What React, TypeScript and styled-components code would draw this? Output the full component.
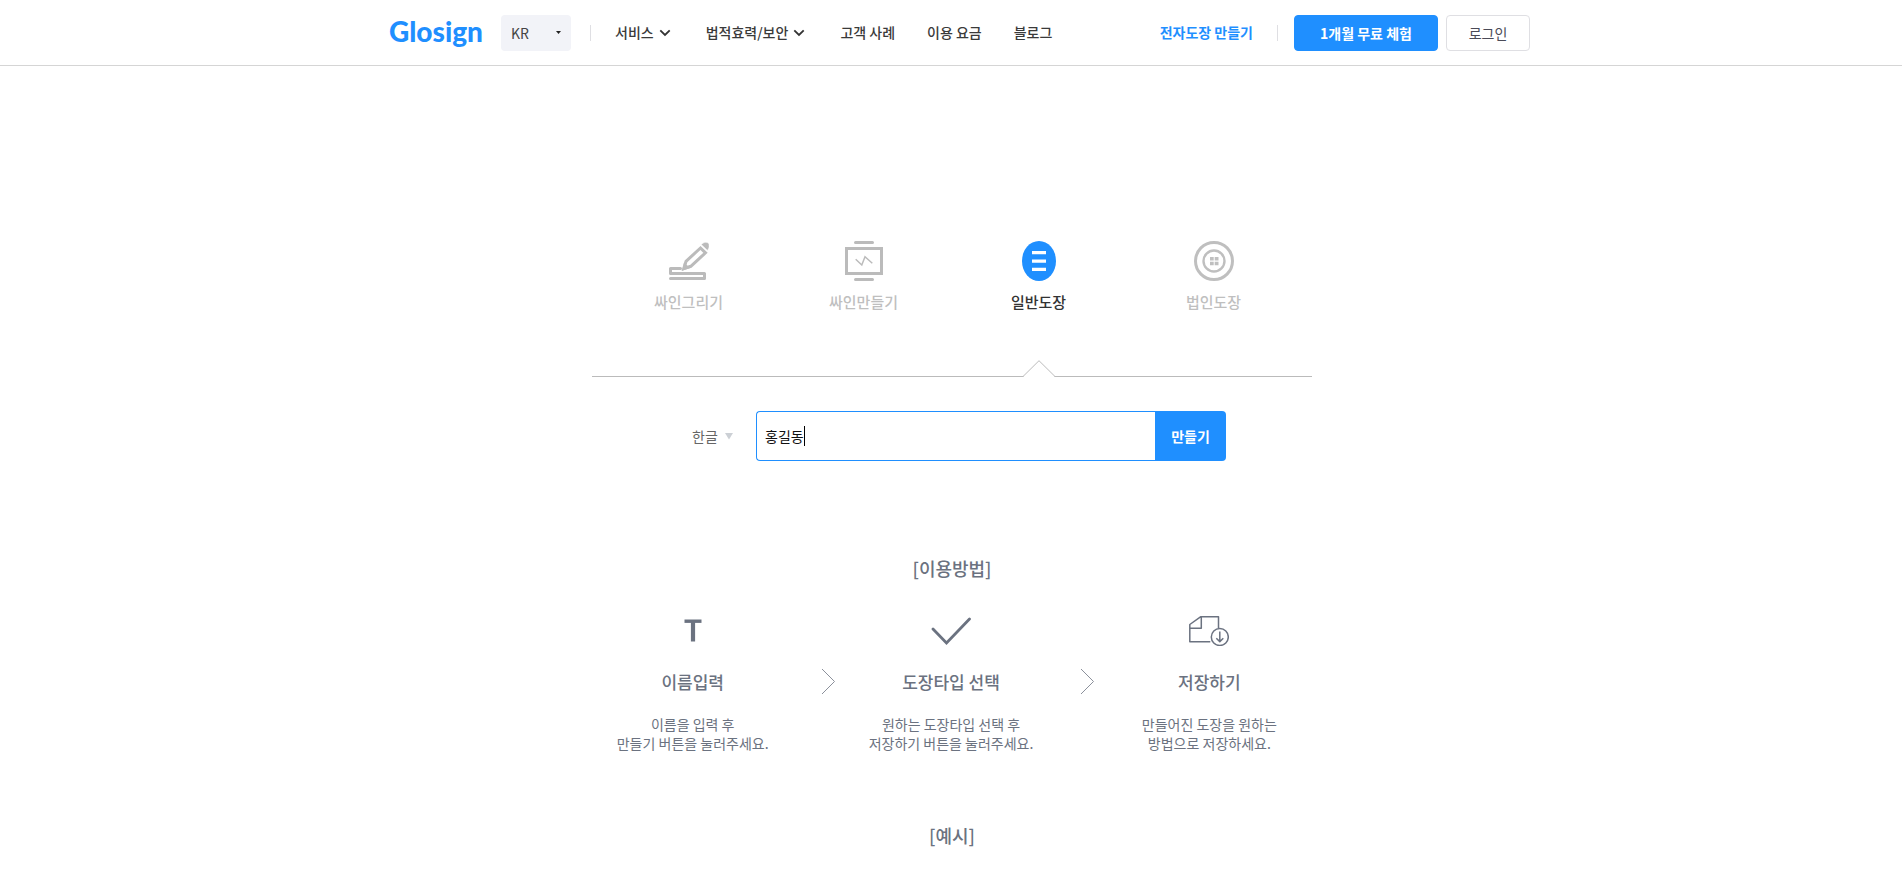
import React from 'react';
import styled, { createGlobalStyle } from 'styled-components';

const GlobalStyle = createGlobalStyle`
  *, *::before, *::after { box-sizing: border-box; }
  body {
    margin: 0;
    background: #fff;
    color: #333;
    font-family: "Noto Sans CJK KR", "Noto Sans", sans-serif;
    font-size: 14px;
    line-height: 20px;
  }
  button, input, select { font: inherit; }
  h2, h3, p { margin: 0; font-weight: 400; }
`;

const Header = styled.header`
  display: flex;
  justify-content: center;
  height: 66px;
  padding: 0 16px;
  border-bottom: 1px solid #d5d5d5;
`;

const HeaderInner = styled.div`
  display: flex;
  align-items: center;
  width: 100%;
  max-width: 1158px;
  padding-left: 17px;
`;

const Logo = styled.a`
  width: 96px;
  padding-bottom: 4px;
  color: #1f8fff;
  font-family: Lato, sans-serif;
  font-size: 28px;
  font-weight: 900;
  line-height: 32px;
  text-decoration: none;
`;

const SelectBox = styled.div`
  display: flex;
  align-items: center;
  position: relative;

  svg {
    position: absolute;
    right: 10px;
    pointer-events: none;
  }
`;

const LocaleSelect = styled.select`
  appearance: none;
  width: 70px;
  height: 36px;
  margin-left: 16px;
  padding: 0 10px;
  border: 0;
  border-radius: 4px;
  background: #f2f3f8;
  color: #444;
`;

const Divider = styled.span<{ $left: number; $right: number }>`
  flex: none;
  width: 1px;
  height: 16px;
  margin: 0 ${(p) => p.$right}px 0 ${(p) => p.$left}px;
  background: #dfdfe3;
`;

const Nav = styled.nav`
  display: flex;
  flex: 1;
  gap: 32px;
`;

const NavLink = styled.a`
  display: flex;
  align-items: center;
  gap: 4px;
  padding-bottom: 2px;
  color: #3a3a3a;
  font-weight: 500;
  white-space: nowrap;
  text-decoration: none;

  svg {
    margin-right: 2px;
  }
`;

const StampLink = styled(NavLink)`
  color: #1f8fff;
  font-weight: 700;
`;

const HeaderButton = styled.button<{ $primary?: boolean }>`
  flex: none;
  width: ${(p) => (p.$primary ? 144 : 84)}px;
  height: 36px;
  margin-right: ${(p) => (p.$primary ? 8 : 0)}px;
  padding: 0;
  border: 1px solid ${(p) => (p.$primary ? '#1f8fff' : '#dfdfe3')};
  border-radius: 4px;
  background: ${(p) => (p.$primary ? '#1f8fff' : '#fff')};
  color: ${(p) => (p.$primary ? '#fff' : '#4a4a57')};
  font-weight: ${(p) => (p.$primary ? 700 : 400)};
`;

const Main = styled.main`
  width: 100%;
  max-width: 722px;
  margin: 0 auto;
  padding: 175px 0 0 2px;
`;

const Tabs = styled.div`
  display: grid;
  grid-template-columns: repeat(4, 1fr);
  padding: 0 11px 0 9px;
  border-bottom: 1px solid #bbb;
`;

const Tab = styled.button<{ $active: boolean }>`
  display: flex;
  flex-direction: column;
  align-items: center;
  gap: 10px;
  position: relative;
  height: 135px;
  padding: 0;
  border: 0;
  background: none;
  color: ${(p) => (p.$active ? '#333' : '#bfbfbf')};
  font-size: 15px;
  font-weight: 500;
  line-height: 22px;
`;

const Pointer = styled.svg`
  position: absolute;
  bottom: -1px;
`;

const NameForm = styled.form`
  display: flex;
  align-items: center;
  margin: 34px 86px 0 100px;
`;

const LanguageSelect = styled.select`
  appearance: none;
  width: 64px;
  height: 50px;
  padding: 0;
  border: 0;
  background: none;
  color: #666;
`;

const NameField = styled.div`
  display: flex;
  flex: 1;
  align-items: center;
  position: relative;
  min-width: 0;
`;

const NameInput = styled.input`
  flex: 1;
  min-width: 0;
  height: 50px;
  padding: 0 8px;
  border: 1px solid #1f8fff;
  border-right: 0;
  border-radius: 4px 0 0 4px;
  outline: 0;
  color: #111;
  caret-color: transparent;
`;

const Caret = styled.span`
  position: absolute;
  left: 48px;
  width: 1px;
  height: 20px;
  background: #000;
`;

const CreateButton = styled.button`
  width: 71px;
  height: 50px;
  padding: 0;
  border: 0;
  border-radius: 0 4px 4px 0;
  background: #1f8fff;
  color: #fff;
  font-weight: 700;
`;

const SectionTitle = styled.h2<{ $top: number }>`
  margin-top: ${(p) => p.$top}px;
  color: #6b7280;
  font-size: 18px;
  font-weight: 500;
  line-height: 26px;
  text-align: center;
`;

const Steps = styled.div`
  display: grid;
  grid-template-columns: 1fr 57px 1fr 57px 1fr;
  margin-top: 29px;
  padding-right: 2px;
  color: #6b7280;
`;

const Step = styled.section`
  display: flex;
  flex-direction: column;
  align-items: center;
  text-align: center;
  white-space: nowrap;
`;

const StepIcon = styled.div`
  display: flex;
  align-items: center;
  justify-content: center;
  height: 42px;
`;

const StepTitle = styled.h3`
  margin-top: 18px;
  font-size: 17px;
  font-weight: 500;
  line-height: 24px;
`;

const StepText = styled.p`
  margin-top: 21px;
  line-height: 19px;
`;

const StepArrow = styled.div`
  padding: 58px 0 0 28px;
`;

const MenuChevron = () => (
  <svg width="14" height="14" viewBox="0 0 14 14" fill="none" stroke="#333" strokeWidth="1.800" aria-hidden="true">
    <path d="M2.300 5.300 7 10l4.700-4.700" />
  </svg>
);

const DrawIcon = () => (
  <svg width="40" height="40" viewBox="0 0 40 40" fill="none" stroke="#bbb" strokeWidth="3" aria-hidden="true">
    <path d="M11.500 27.500H1.500v5h34v5h-34" strokeLinejoin="round" strokeLinecap="round" />
    <path d="M15 27.500 17 20.300 31.500 7l5 4.800L21.800 25.300z" />
    <path d="M12.700 29.900 15 21.500l6 5.500z" fill="#bbb" stroke="none" />
    <path d="M32.200 3.500C35 .8 38 1 39.600 2.200c1 1.800 1 4.800-1.200 7.300z" fill="#bbb" stroke="#fff" strokeWidth=".6" />
  </svg>
);

const ScreenIcon = () => (
  <svg width="40" height="40" viewBox="0 0 40 40" fill="none" stroke="#bbb" strokeWidth="3" aria-hidden="true">
    <path d="M11.500 1.500h17M11.500 38.500h17" strokeLinecap="round" />
    <path d="M2.500 7.500h35v25h-35z" />
    <path d="m11.700 18.300 6.100 5.700 3.200-8.200 7.300 6.500" strokeWidth="1.500" />
  </svg>
);

const SealIcon = () => (
  <svg width="34" height="40" viewBox="0 0 34 40" aria-hidden="true">
    <ellipse cx="17" cy="20" rx="17" ry="20" fill="#1f8fff" />
    <path d="M10 10h14v3.300H10zM10 18.400h14v3.300H10zM10 26.700h14V30H10z" fill="#fff" />
  </svg>
);

const CorporateIcon = () => (
  <svg width="40" height="40" viewBox="0 0 40 40" fill="none" stroke="#bfbfbf" aria-hidden="true">
    <circle cx="20" cy="20" r="18.500" strokeWidth="3" />
    <circle cx="20" cy="20" r="10.500" strokeWidth="2.400" />
    <path d="M16 16h3.700v3.500H16zM20.700 16h3.800v3.500h-3.800zM16 20.800h3.700v3.500H16zM20.700 20.800h3.800v3.500h-3.800z" fill="#bfbfbf" stroke="none" />
  </svg>
);

const TypeIcon = () => (
  <svg width="18" height="24" viewBox="0 0 18 24" fill="none" stroke="#6b7280" aria-hidden="true">
    <path d="M.5 2.200h17" strokeWidth="3.400" />
    <path d="M9 1v21.500" strokeWidth="4.200" />
  </svg>
);

const CheckIcon = () => (
  <svg width="40" height="30" viewBox="0 0 40 30" fill="none" stroke="#6b7280" strokeWidth="2.800" strokeLinecap="round" aria-hidden="true">
    <path d="m2 13 13.500 14L38.500 3" />
  </svg>
);

const SaveIcon = () => (
  <svg width="40" height="30" viewBox="0 0 40 30" fill="none" stroke="#6b7280" strokeWidth="1.500" strokeLinejoin="round" aria-hidden="true">
    <path d="M29.500 12V.8h-18L.8 8.500v17.200h20.500M12.300.9v11.300H.8" />
    <circle cx="30.800" cy="21" r="8.500" />
    <path d="M30.800 15.500v10M27.300 22.200l3.500 3.400 3.500-3.400" />
  </svg>
);

const ArrowIcon = () => (
  <svg width="15" height="27" viewBox="0 0 15 27" fill="none" stroke="#8b909b" aria-hidden="true">
    <path d="M1 1l12.500 12.500L1 26" />
  </svg>
);

const NAV = [
  { label: '서비스', menu: true },
  { label: '법적효력/보안', menu: true },
  { label: '고객 사례' },
  { label: '이용 요금' },
  { label: '블로그' },
];

const TABS = [
  { label: '싸인그리기', icon: <DrawIcon /> },
  { label: '싸인만들기', icon: <ScreenIcon /> },
  { label: '일반도장', icon: <SealIcon />, active: true },
  { label: '법인도장', icon: <CorporateIcon /> },
];

const STEPS = [
  { title: '이름입력', icon: <TypeIcon />, lines: ['이름을 입력 후', '만들기 버튼을 눌러주세요.'] },
  { title: '도장타입 선택', icon: <CheckIcon />, lines: ['원하는 도장타입 선택 후', '저장하기 버튼을 눌러주세요.'] },
  { title: '저장하기', icon: <SaveIcon />, lines: ['만들어진 도장을 원하는', '방법으로 저장하세요.'] },
];

export default function App() {
  return (
    <>
      <GlobalStyle />
      <Header>
        <HeaderInner>
          <Logo href="#">Glosign</Logo>
          <SelectBox>
            <LocaleSelect aria-label="언어" defaultValue="KR">
              <option>KR</option>
            </LocaleSelect>
            <svg width="5" height="3" viewBox="0 0 5 3" aria-hidden="true">
              <path d="M0 0h5L2.500 3z" fill="#222" />
            </svg>
          </SelectBox>
          <Divider $left={19} $right={24} />
          <Nav>
            {NAV.map((item) => (
              <NavLink href="#" key={item.label}>
                {item.label}
                {item.menu && <MenuChevron />}
              </NavLink>
            ))}
          </Nav>
          <StampLink href="#">전자도장 만들기</StampLink>
          <Divider $left={24} $right={16} />
          <HeaderButton $primary type="button">1개월 무료 체험</HeaderButton>
          <HeaderButton type="button">로그인</HeaderButton>
        </HeaderInner>
      </Header>
      <Main>
        <Tabs role="tablist">
          {TABS.map((tab) => (
            <Tab key={tab.label} type="button" role="tab" aria-selected={!!tab.active} $active={!!tab.active}>
              {tab.icon}
              {tab.label}
              {tab.active && (
                <Pointer width="32" height="17" viewBox="0 0 32 17" aria-hidden="true">
                  <path d="M0 17 16 1l16 16z" fill="#fff" />
                  <path d="M0 16.500 16 .7l16 15.800" fill="none" stroke="#bbb" />
                </Pointer>
              )}
            </Tab>
          ))}
        </Tabs>
        <NameForm onSubmit={(e) => e.preventDefault()}>
          <SelectBox>
            <LanguageSelect aria-label="문자" defaultValue="한글">
              <option>한글</option>
            </LanguageSelect>
            <svg width="22" height="7" viewBox="0 0 22 7" aria-hidden="true">
              <path d="M1 0h8L5 6.500z" fill="#ccd0d5" />
            </svg>
          </SelectBox>
          <NameField>
            <NameInput aria-label="이름" defaultValue="홍길동" />
            <Caret />
          </NameField>
          <CreateButton type="submit">만들기</CreateButton>
        </NameForm>
        <SectionTitle $top={94}>[이용방법]</SectionTitle>
        <Steps>
          {STEPS.map((step, i) => (
            <React.Fragment key={step.title}>
              {i > 0 && (
                <StepArrow>
                  <ArrowIcon />
                </StepArrow>
              )}
              <Step>
                <StepIcon>{step.icon}</StepIcon>
                <StepTitle>{step.title}</StepTitle>
                <StepText>
                  {step.lines[0]}
                  <br />
                  {step.lines[1]}
                </StepText>
              </Step>
            </React.Fragment>
          ))}
        </Steps>
        <SectionTitle $top={69}>[예시]</SectionTitle>
      </Main>
    </>
  );
}
